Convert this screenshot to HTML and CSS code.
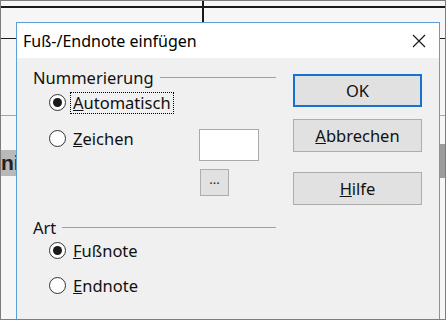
FILE: index.html
```html
<!DOCTYPE html>
<html lang="de">
<head>
    <meta charset="UTF-8">
    <meta name="viewport" content="width=device-width, initial-scale=1.0">
    <title>Fuß-/Endnote einfügen</title>
    <link rel="stylesheet" href="styles.css">
</head>
<body>
    <div class="frame">
        <!-- document behind the dialog -->
        <div class="doc-line top-rule"></div>
        <div class="doc-line col-rule"></div>
        <div class="doc-line row-rule"></div>
        <div class="doc-line grey-rule"></div>
        <div class="doc-heading">ni</div>
        <div class="doc-scroll"></div>

        <div class="dialog">
            <div class="titlebar">
                <span class="title">Fuß-/Endnote einfügen</span>
                <svg class="close" width="14" height="14" viewBox="0 0 14 14">
                    <path d="M1 1 L13 13 M13 1 L1 13" stroke="#1a1a1a" stroke-width="1.2" fill="none"/>
                </svg>
            </div>
            <div class="body">
                <div class="left">
                    <div class="group-head">
                        <span>Nummerierung</span>
                        <span class="rule"></span>
                    </div>
                    <div class="radio-row first">
                        <span class="radio checked"></span>
                        <span class="label focus"><u>A</u>utomatisch</span>
                    </div>
                    <div class="radio-row sign-row">
                        <span class="radio"></span>
                        <span class="label"><u>Z</u>eichen</span>
                        <span class="char-box"></span>
                    </div>
                    <button class="dots">...</button>

                    <div class="group-head art">
                        <span>Art</span>
                        <span class="rule"></span>
                    </div>
                    <div class="radio-row foot">
                        <span class="radio checked"></span>
                        <span class="label"><u>F</u>ußnote</span>
                    </div>
                    <div class="radio-row end">
                        <span class="radio"></span>
                        <span class="label"><u>E</u>ndnote</span>
                    </div>
                </div>
                <div class="right">
                    <button class="btn default">OK</button>
                    <button class="btn cancel"><u>A</u>bbrechen</button>
                    <button class="btn help"><u>H</u>ilfe</button>
                </div>
            </div>
        </div>
    </div>
</body>
</html>
```

FILE: styles.css
```css
body {
    margin: 0;
    font-family: 'Noto Sans', 'Open Sans', sans-serif;
    background: #ffffff;
}
.frame {
    position: relative;
    width: 446px;
    height: 320px;
    box-sizing: border-box;
    border: 1px solid #7d7d7d;
    background: #f6f6f6;
    overflow: hidden;
}
.doc-line {
    position: absolute;
    background: #1a1a1a;
}
.top-rule {
    left: 0;
    right: 0;
    top: 5px;
    height: 2px;
}
.col-rule {
    left: 201px;
    top: 0;
    width: 2px;
    height: 22px;
}
.row-rule {
    left: 0;
    right: 0;
    top: 37px;
    height: 1px;
}
.grey-rule {
    left: 0;
    right: 0;
    top: 114px;
    height: 1px;
    background: #a8a8a8;
}
.doc-heading {
    position: absolute;
    left: 0;
    top: 149px;
    width: 26px;
    height: 26px;
    background: #b9b9b9;
    font-family: 'Liberation Sans', sans-serif;
    font-weight: bold;
    font-size: 21px;
    line-height: 26px;
    color: #222;
}
.doc-scroll {
    position: absolute;
    right: 0;
    top: 143px;
    width: 8px;
    height: 34px;
    background: #9c9c9c;
}
.dialog {
    position: absolute;
    left: 15px;
    top: 21px;
    width: 422px;
    height: 320px;
    border: 1px solid #5f9ed8;
    background: #f0f0f0;
    color: #111;
    font-size: 16.5px;
}
.titlebar {
    height: 35px;
    background: #ffffff;
    display: flex;
    align-items: center;
    justify-content: space-between;
    padding: 0 13px 0 6px;
}
.title {
    font-size: 16px;
    color: #000;
}
.body {
    display: flex;
    padding: 9px 15px 0 16px;
}
.left {
    width: 243px;
    display: flex;
    flex-direction: column;
}
.group-head {
    display: flex;
    align-items: center;
    height: 20px;
}
.group-head .rule {
    flex: 1;
    height: 1px;
    background: #a0a0a0;
    margin-left: 6px;
}
.group-head.art {
    margin-top: 21px;
}
.radio-row {
    display: flex;
    align-items: flex-start;
    padding-left: 16px;
    height: 20px;
}
.radio-row.first {
    margin-top: 6px;
}
.radio-row.sign-row {
    margin-top: 16px;
}
.radio-row.foot {
    margin-top: 4px;
}
.radio-row.end {
    margin-top: 15px;
}
.radio {
    width: 17px;
    height: 17px;
    box-sizing: border-box;
    border: 1px solid #333;
    border-radius: 50%;
    background: #fff;
    margin-top: 1px;
    display: flex;
    align-items: center;
    justify-content: center;
}
.radio.checked::after {
    content: "";
    width: 9px;
    height: 9px;
    border-radius: 50%;
    background: #1a1a1a;
}
.label {
    margin-left: 5px;
    padding: 0 2px;
    height: 20px;
    line-height: 20px;
    box-sizing: border-box;
}
.label.focus {
    outline: 1px dotted #000;
}
.char-box {
    margin-left: auto;
    margin-right: 17px;
    width: 60px;
    height: 32px;
    box-sizing: border-box;
    border: 1px solid #a9a9a9;
    background: #fff;
}
.dots {
    margin: 20px 0 0 167px;
    width: 29px;
    height: 27px;
    padding: 0 0 6px;
    border: 1px solid #adadad;
    background: #e1e1e1;
    font-family: inherit;
    font-size: 13px;
    color: #222;
    line-height: 1;
}
.right {
    display: flex;
    flex-direction: column;
    margin-left: 17px;
    margin-top: 7px;
}
.btn {
    width: 129px;
    height: 33px;
    border: 1px solid #adadad;
    background: #e1e1e1;
    font-family: inherit;
    font-size: 16.5px;
    color: #111;
    padding: 0;
}
.btn.default {
    border: 2px solid #1672cc;
}
.btn.cancel {
    margin-top: 12px;
}
.btn.help {
    margin-top: 20px;
}
```
